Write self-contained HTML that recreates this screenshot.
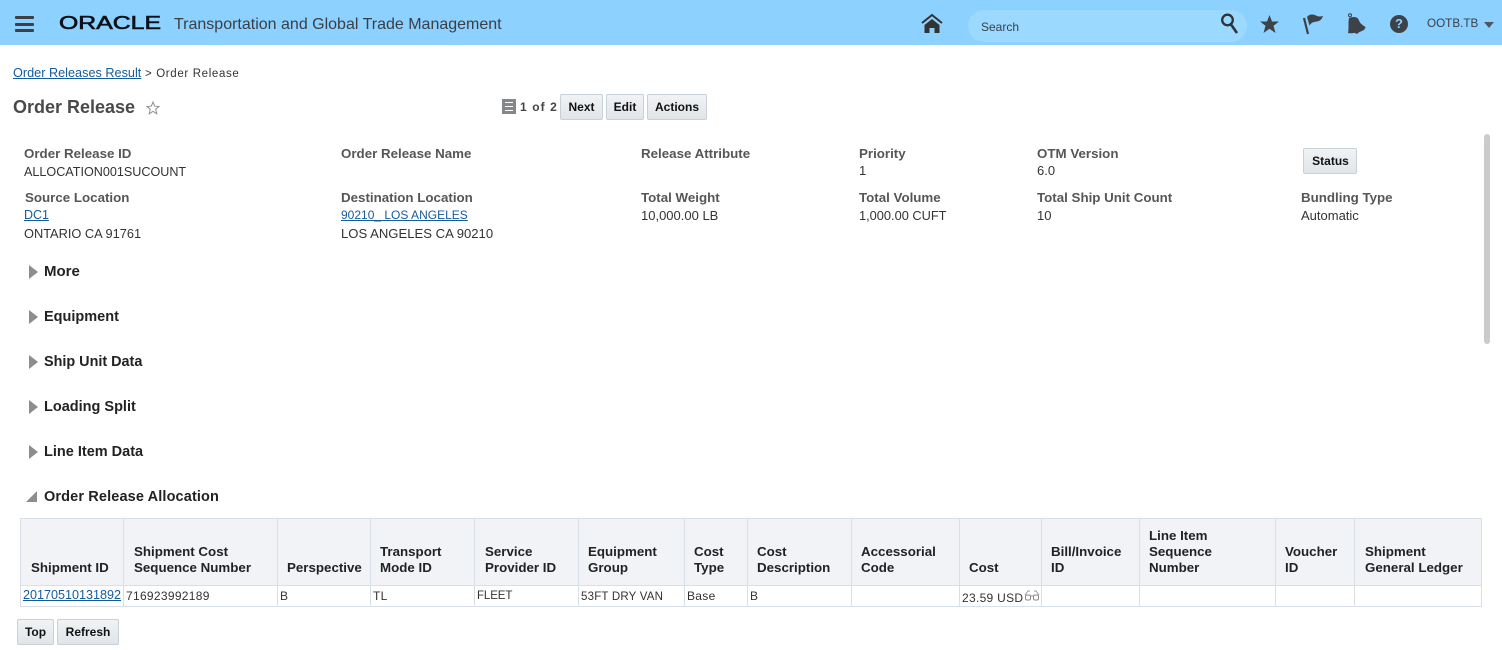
<!DOCTYPE html>
<html><head><meta charset="utf-8"><title>Order Release</title>
<style>
html,body{margin:0;padding:0;width:1502px;height:650px;overflow:hidden;background:#fff}
body{position:relative;font-family:"Liberation Sans",sans-serif;font-size:14px;color:#3f3f3f}
.t{position:absolute;white-space:nowrap;line-height:16px}
.l{font-weight:bold;color:#565656;font-size:13.33px}
.v{font-size:13px;color:#333}
a{color:#145c9e;text-decoration:underline}
.h{font-weight:bold;color:#222;font-size:14.5px}
.tri{position:absolute;width:0;height:0;border-left:9px solid #8b8d90;border-top:7px solid transparent;border-bottom:7px solid transparent}
.btn{position:absolute;box-sizing:border-box;height:26px;line-height:25px;text-align:center;font-weight:bold;font-size:12px;color:#111;background:linear-gradient(#f1f3f5,#e1e5e9);border:1px solid #c8d0d8;border-radius:2px}
.hb{position:absolute;background:#f1f3f7}
.vl{position:absolute;width:1px;background:#d8dfe6;top:518px;height:89px}
.hl{position:absolute;left:20px;width:1462px;height:1px;background:#d8dfe6}
.th{position:absolute;white-space:nowrap;font-weight:bold;font-size:13.33px;line-height:16px;color:#222}
.td{position:absolute;white-space:nowrap;font-size:12px;line-height:14px;color:#333;letter-spacing:.3px;top:589px}
svg{position:absolute}
</style></head><body>
<div style="position:absolute;left:0;top:0;width:1502px;height:45px;background:#8cd1ff"></div>
<div style="position:absolute;left:15px;top:16px;width:19px;height:3px;background:#3c4045;border-radius:1px"></div>
<div style="position:absolute;left:15px;top:23px;width:19px;height:3px;background:#3c4045;border-radius:1px"></div>
<div style="position:absolute;left:15px;top:29px;width:19px;height:3px;background:#3c4045;border-radius:1px"></div>
<svg style="left:57px;top:12px" width="108" height="22"><text x="2" y="17" font-family="Liberation Sans" font-size="18" textLength="102" lengthAdjust="spacingAndGlyphs" fill="#0d1118" stroke="#0d1118" stroke-width=".6">ORACLE</text></svg>
<div class="t" style="left:174px;top:17px;font-size:16px;color:#3a3f44">Transportation and Global Trade Management</div>

<svg style="left:920px;top:13px" width="24" height="21" viewBox="0 0 24 21"><path d="M2 10 L12 2 L22 10" fill="none" stroke="#333" stroke-width="2"/><path d="M4.500 12 L12 6 L19.500 12 V20 H14.500 V15 H9.500 V20 H4.500Z" fill="#333"/></svg>
<div style="position:absolute;left:968px;top:10px;width:279px;height:32px;border-radius:16px;background:#9bd9ff"></div>
<div class="t" style="left:981px;top:19px;font-size:12px;color:#3b4046">Search</div>
<svg style="left:1219px;top:12px" width="22" height="23" viewBox="0 0 22 23"><circle cx="8.500" cy="8" r="5.300" fill="none" stroke="#2e3338" stroke-width="2.300"/><path d="M12 12.500 L18 21" stroke="#2e3338" stroke-width="2.600"/></svg>
<svg style="left:1259px;top:14px" width="21" height="20" viewBox="0 0 21 20"><path d="M10.500 1 L13 7.500 L20 7.500 L14.500 11.800 L16.500 19 L10.500 14.800 L4.500 19 L6.500 11.800 L1 7.500 L8 7.500Z" fill="#3c4247"/></svg>
<svg style="left:1301px;top:13px" width="24" height="22" viewBox="0 0 24 22"><path d="M3 5 L7 21" stroke="#3c4247" stroke-width="2.200"/><path d="M6 4 C8 1 12 1 15 2.500 C18 4 20 3.500 22 3 C21 6 19 8 16 8.500 C13 9 10.500 9 8.500 12.500Z" fill="#3c4247"/></svg>
<svg style="left:1346px;top:13px" width="22" height="23" viewBox="0 0 22 23"><circle cx="4" cy="2.300" r="1.500" fill="none" stroke="#3c4247"/><path d="M3 5 C8 3 12 4 13 7.500 C14 10.500 16.500 12 19.500 14 C19.500 16.500 16 18.500 11 19.500 C7.500 20.200 4.500 20.500 2 20 C3 16 2 9 3 5Z" fill="#3c4247"/><path d="M8.500 19.500 Q11 22.500 13.500 18.500" fill="#3c4247"/></svg>
<div style="position:absolute;left:1390px;top:15px;width:18px;height:18px;border-radius:9px;background:#3c4247;color:#8cd1ff;font-weight:bold;font-size:13px;line-height:18px;text-align:center">?</div>
<div class="t" style="left:1427px;top:16px;font-size:11.700px;color:#3b4046">OOTB.TB</div>
<div style="position:absolute;left:1484px;top:22px;width:0;height:0;border-left:5px solid transparent;border-right:5px solid transparent;border-top:6px solid #50565c"></div>

<div class="t" style="left:13px;top:65px;font-size:12.700px"><a href="#">Order Releases Result</a></div>
<div class="t" style="left:145px;top:66px;font-size:11.500px;letter-spacing:.65px;color:#333">&gt; Order Release</div>
<div class="t" style="left:13px;top:99px;font-size:18px;font-weight:bold;color:#4a4a4a">Order Release</div>
<svg style="left:146px;top:101px" width="14" height="14" viewBox="0 0 14 14"><path d="M7 1 L8.700 5.200 L13 5.400 L9.700 8.200 L10.800 12.800 L7 10.300 L3.200 12.800 L4.300 8.200 L1 5.400 L5.300 5.200Z" fill="none" stroke="#8f8f8f" stroke-width="1"/></svg>

<div style="position:absolute;left:502px;top:99px;width:14px;height:15px;background:#85888b"></div>
<div style="position:absolute;left:505px;top:102px;width:8px;height:1px;background:#fff"></div>
<div style="position:absolute;left:505px;top:106px;width:8px;height:1px;background:#fff"></div>
<div style="position:absolute;left:505px;top:110px;width:8px;height:1px;background:#fff"></div>
<div class="t" style="left:520px;top:99px;font-size:12px;font-weight:bold;letter-spacing:1.100px;color:#444">1 of 2</div>
<div class="btn" style="left:560px;top:94px;width:43px">Next</div>
<div class="btn" style="left:606px;top:94px;width:38px">Edit</div>
<div class="btn" style="left:647px;top:94px;width:60px">Actions</div>

<div class="t l" style="left:24px;top:146px">Order Release ID</div>
<div class="t v" style="left:24px;top:164px;font-size:12.600px">ALLOCATION001SUCOUNT</div>
<div class="t l" style="left:341px;top:146px">Order Release Name</div>
<div class="t l" style="left:641px;top:146px">Release Attribute</div>
<div class="t l" style="left:859px;top:146px">Priority</div>
<div class="t v" style="left:859px;top:163px">1</div>
<div class="t l" style="left:1037px;top:146px">OTM Version</div>
<div class="t v" style="left:1037px;top:163px">6.0</div>
<div class="btn" style="left:1303px;top:148px;width:54px;padding-left:1px">Status</div>

<div class="t l" style="left:25px;top:190px">Source Location</div>
<div class="t v" style="left:24px;top:207px;font-size:12.500px"><a href="#">DC1</a></div>
<div class="t v" style="left:24px;top:226px;font-size:12.800px">ONTARIO CA 91761</div>
<div class="t l" style="left:341px;top:190px">Destination Location</div>
<div class="t v" style="left:341px;top:207px;font-size:12px"><a href="#">90210_ LOS ANGELES</a></div>
<div class="t v" style="left:341px;top:226px;font-size:13.100px">LOS ANGELES CA 90210</div>
<div class="t l" style="left:641px;top:190px">Total Weight</div>
<div class="t v" style="left:641px;top:208px">10,000.00 LB</div>
<div class="t l" style="left:859px;top:190px">Total Volume</div>
<div class="t v" style="left:859px;top:208px;font-size:12.800px">1,000.00 CUFT</div>
<div class="t l" style="left:1037px;top:190px">Total Ship Unit Count</div>
<div class="t v" style="left:1037px;top:208px">10</div>
<div class="t l" style="left:1301px;top:190px">Bundling Type</div>
<div class="t v" style="left:1301px;top:208px;font-size:13px">Automatic</div>

<div style="position:absolute;left:1484px;top:134px;width:6px;height:210px;background:#cbcbcb;border-radius:3px"></div>

<div class="tri" style="left:29px;top:265px"></div><div class="t h" style="left:44px;top:264px;font-size:15px">More</div>
<div class="tri" style="left:29px;top:310px"></div><div class="t h" style="left:44px;top:309px">Equipment</div>
<div class="tri" style="left:29px;top:355px"></div><div class="t h" style="left:44px;top:354px;font-size:14.400px">Ship Unit Data</div>
<div class="tri" style="left:29px;top:400px"></div><div class="t h" style="left:44px;top:399px">Loading Split</div>
<div class="tri" style="left:29px;top:445px"></div><div class="t h" style="left:44px;top:444px">Line Item Data</div>
<div style="position:absolute;left:26px;top:491px;width:0;height:0;border-bottom:11px solid #8b8d90;border-left:11px solid transparent"></div>
<div class="t h" style="left:44px;top:489px;letter-spacing:.13px">Order Release Allocation</div>

<div class="hb" style="left:20px;top:518px;width:1462px;height:67px"></div>
<div class="hl" style="top:518px"></div><div class="hl" style="top:585px"></div><div class="hl" style="top:606px"></div>
<div class="vl" style="left:20px"></div><div class="vl" style="left:123px"></div><div class="vl" style="left:277px"></div><div class="vl" style="left:370px"></div><div class="vl" style="left:474px"></div><div class="vl" style="left:578px"></div><div class="vl" style="left:684px"></div><div class="vl" style="left:747px"></div><div class="vl" style="left:851px"></div><div class="vl" style="left:959px"></div><div class="vl" style="left:1041px"></div><div class="vl" style="left:1139px"></div><div class="vl" style="left:1275px"></div><div class="vl" style="left:1354px"></div><div class="vl" style="left:1481px"></div>

<div class="th" style="left:31px;top:560px">Shipment ID</div>
<div class="th" style="left:134px;top:544px">Shipment Cost<br>Sequence Number</div>
<div class="th" style="left:287px;top:560px">Perspective</div>
<div class="th" style="left:380px;top:544px">Transport<br>Mode ID</div>
<div class="th" style="left:485px;top:544px">Service<br>Provider ID</div>
<div class="th" style="left:588px;top:544px">Equipment<br>Group</div>
<div class="th" style="left:694px;top:544px">Cost<br>Type</div>
<div class="th" style="left:757px;top:544px">Cost<br>Description</div>
<div class="th" style="left:861px;top:544px">Accessorial<br>Code</div>
<div class="th" style="left:969px;top:560px">Cost</div>
<div class="th" style="left:1051px;top:544px">Bill/Invoice<br>ID</div>
<div class="th" style="left:1149px;top:528px">Line Item<br>Sequence<br>Number</div>
<div class="th" style="left:1285px;top:544px">Voucher<br>ID</div>
<div class="th" style="left:1365px;top:544px">Shipment<br>General Ledger</div>

<div class="td" style="left:23px;font-size:12.600px;letter-spacing:0;top:588px"><a href="#">20170510131892</a></div>
<div class="td" style="left:126px">716923992189</div>
<div class="td" style="left:280px">B</div>
<div class="td" style="left:373px">TL</div>
<div class="td" style="left:477px;font-size:11.500px;letter-spacing:-.1px;top:589px">FLEET</div>
<div class="td" style="left:581px;font-size:11.500px;letter-spacing:.2px;top:590px">53FT DRY VAN</div>
<div class="td" style="left:687px">Base</div>
<div class="td" style="left:750px">B</div>
<div class="td" style="left:962px;top:591px">23.59 USD</div>
<svg style="left:1024px;top:590px" width="16" height="11" viewBox="0 0 16 11"><path d="M1 5 L4 1 H6 M15 5 L12 1 H10 M6.500 6 H9.500" fill="none" stroke="#9a9a9a"/><rect x="1.500" y="5" width="5" height="5" rx="1.500" fill="none" stroke="#8a8a8a"/><rect x="9.500" y="5" width="5" height="5" rx="1.500" fill="none" stroke="#8a8a8a"/></svg>

<div class="btn" style="left:17px;top:619px;width:37px">Top</div>
<div class="btn" style="left:57px;top:619px;width:62px">Refresh</div>
</body></html>
